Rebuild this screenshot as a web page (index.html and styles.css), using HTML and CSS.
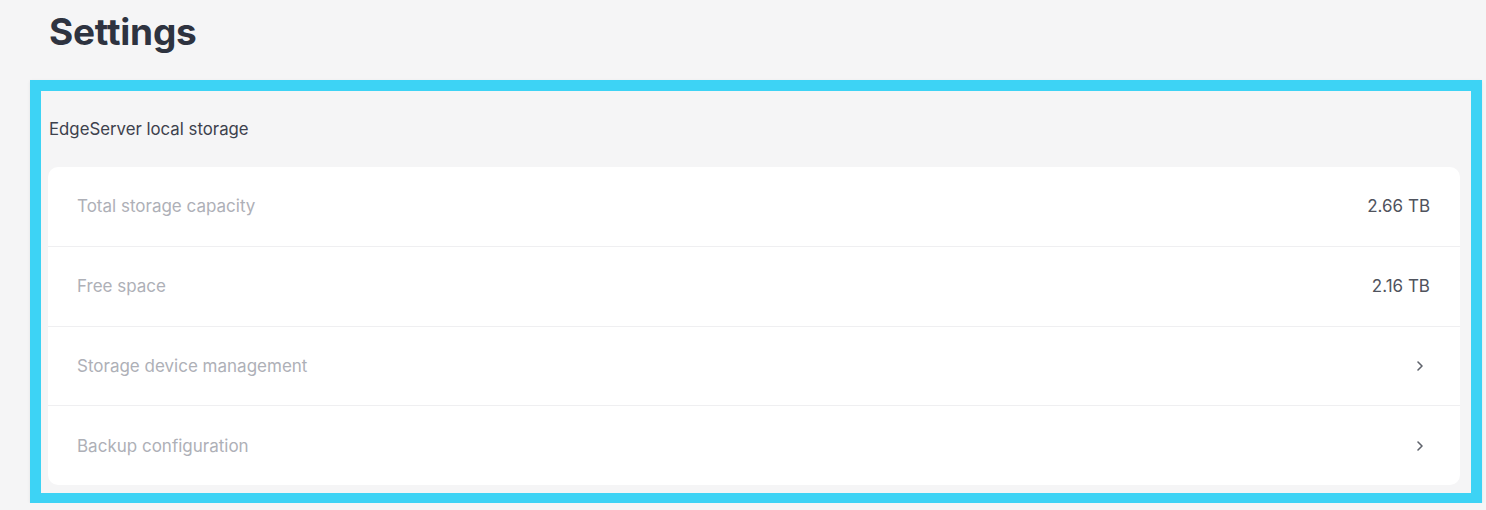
FILE: index.html
```html
<!DOCTYPE html>
<html lang="en">
<head>
<meta charset="utf-8">
<title>Settings</title>
<link rel="stylesheet" href="styles.css">
</head>
<body>
<main class="page">
  <h1 class="title">Settings</h1>
  <section class="frame">
    <h2 class="section-title">EdgeServer local storage</h2>
    <div class="card">
      <div class="row">
        <span class="label">Total storage capacity</span>
        <span class="value">2.66 TB</span>
      </div>
      <div class="row">
        <span class="label">Free space</span>
        <span class="value">2.16 TB</span>
      </div>
      <div class="row">
        <span class="label">Storage device management</span>
        <svg class="chev" width="8" height="12" viewBox="0 0 8 12"><path d="M2 2l4 4-4 4" fill="none" stroke="#5f636c" stroke-width="1.6" stroke-linecap="round" stroke-linejoin="round"/></svg>
      </div>
      <div class="row">
        <span class="label">Backup configuration</span>
        <svg class="chev" width="8" height="12" viewBox="0 0 8 12"><path d="M2 2l4 4-4 4" fill="none" stroke="#5f636c" stroke-width="1.6" stroke-linecap="round" stroke-linejoin="round"/></svg>
      </div>
    </div>
  </section>
</main>
</body>
</html>
```

FILE: styles.css
```css
html, body {
  margin: 0;
  padding: 0;
  background: #f5f5f6;
  font-family: Inter, "Liberation Sans", sans-serif;
}
.page {
  padding: 10px 0 0 30px;
  width: 1452px;
}
.title {
  margin: 0 0 0 19px;
  font-size: 37px;
  font-weight: 700;
  line-height: 44px;
  color: #2e3340;
  letter-spacing: -0.2px;
  height: 70px;
}
.frame {
  box-sizing: border-box;
  width: 1452px;
  height: 423px;
  border: 11px solid #3dd3f5;
  border-bottom-width: 10px;
  padding: 0 11px 8px 7px;
  display: flex;
  flex-direction: column;
  box-shadow: 0 1px 3px rgba(0, 0, 0, 0.08);
}
.section-title {
  margin: 0;
  height: 76px;
  display: flex;
  align-items: center;
  padding-left: 1px;
  font-size: 16.8px;
  font-weight: 400;
  color: #3d414d;
}
.card {
  flex: 1;
  background: #fff;
  border-radius: 10px;
  display: flex;
  flex-direction: column;
}
.row {
  flex: 1;
  display: flex;
  align-items: center;
  justify-content: space-between;
  padding: 0 30px 0 29px;
  border-top: 1px solid #efeff1;
}
.row:first-child {
  border-top: none;
}
.label {
  font-size: 17px;
  color: #aeb0b7;
}
.value {
  font-size: 17px;
  color: #50535d;
}
.chev {
  margin-right: 6px;
}
```
